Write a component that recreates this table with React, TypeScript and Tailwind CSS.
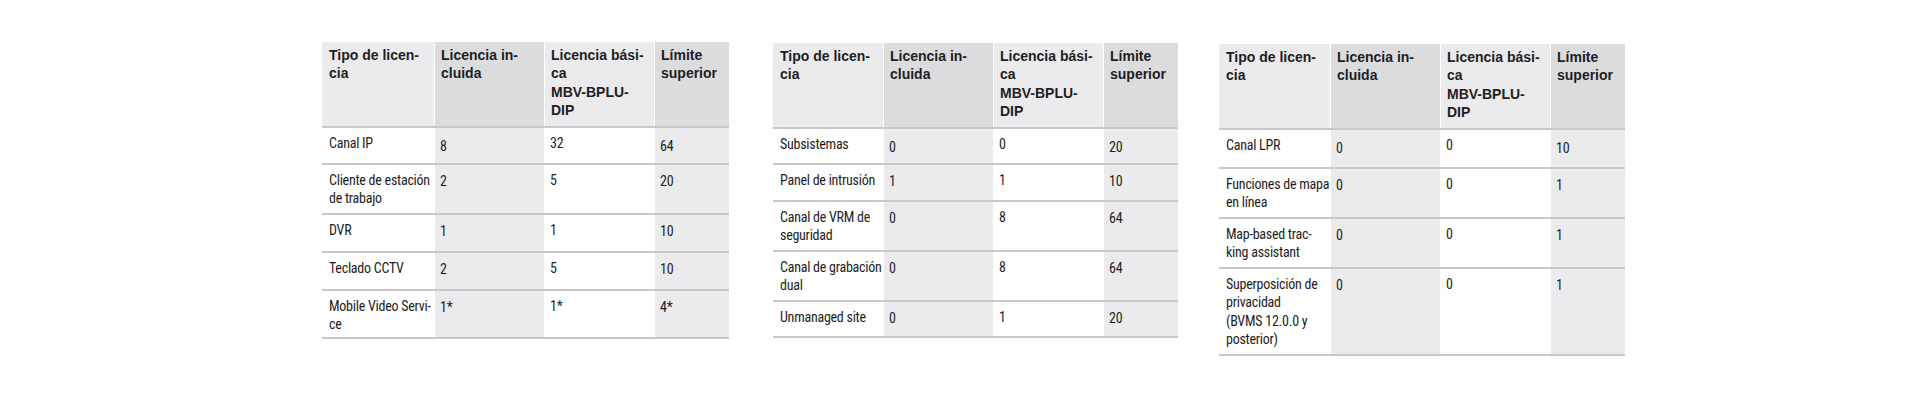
import React from "react";

type Row = { cells: string[][]; h: string };
type TableDef = { mt: string; ml: string; w: string; rows: Row[] };

const HEAD: string[][] = [
  ["Tipo de licen-", "cia"],
  ["Licencia in-", "cluida"],
  ["Licencia bási-", "ca", "MBV-BPLU-", "DIP"],
  ["Límite", "superior"],
];

const tables: TableDef[] = [
  {
    mt: "mt-[42px]",
    ml: "ml-[322px]",
    w: "grid-cols-[112px_110px_110px_75px]",
    rows: [
      { h: "h-[37px]", cells: [["Canal IP"], ["8"], ["32"], ["64"]] },
      { h: "h-[50px]", cells: [["Cliente de estación", "de trabajo"], ["2"], ["5"], ["20"]] },
      { h: "h-[38px]", cells: [["DVR"], ["1"], ["1"], ["10"]] },
      { h: "h-[38px]", cells: [["Teclado CCTV"], ["2"], ["5"], ["10"]] },
      { h: "h-[50px]", cells: [["Mobile Video Servi-", "ce"], ["1*"], ["1*"], ["4*"]] },
    ],
  },
  {
    mt: "mt-[43px]",
    ml: "ml-[44px]",
    w: "grid-cols-[110px_110px_110px_75px]",
    rows: [
      { h: "h-[36px]", cells: [["Subsistemas"], ["0"], ["0"], ["20"]] },
      { h: "h-[37px]", cells: [["Panel de intrusión"], ["1"], ["1"], ["10"]] },
      { h: "h-[50px]", cells: [["Canal de VRM de", "seguridad"], ["0"], ["8"], ["64"]] },
      { h: "h-[50px]", cells: [["Canal de grabación", "dual"], ["0"], ["8"], ["64"]] },
      { h: "h-[38px]", cells: [["Unmanaged site"], ["0"], ["1"], ["20"]] },
    ],
  },
  {
    mt: "mt-[44px]",
    ml: "ml-[41px]",
    w: "grid-cols-[111px_110px_110px_75px]",
    rows: [
      { h: "h-[39px]", cells: [["Canal LPR"], ["0"], ["0"], ["10"]] },
      { h: "h-[50px]", cells: [["Funciones de mapa", "en línea"], ["0"], ["0"], ["1"]] },
      { h: "h-[50px]", cells: [["Map-based trac-", "king assistant"], ["0"], ["0"], ["1"]] },
      {
        h: "h-[89px]",
        cells: [["Superposición de", "privacidad", "(BVMS 12.0.0 y", "posterior)"], ["0"], ["0"], ["1"]],
      },
    ],
  },
];

function Lines({ lines }: { lines: string[] }) {
  return (
    <>
      {lines.map((l, i) => (
        <div key={i} className="whitespace-nowrap">
          {l}
        </div>
      ))}
    </>
  );
}

function Table({ t }: { t: TableDef }) {
  return (
    <div className={`${t.mt} ${t.ml} shrink-0`}>
      <div className={`grid ${t.w} h-[84px]`}>
        {HEAD.map((lines, i) => (
          <div
            key={i}
            className={
              (i % 2 === 1 ? "bg-[#dcdcde] " : "bg-[#ebebed] ") +
              (i > 0 ? "border-l border-white px-[6px] " : "pl-[7px] pr-[2px] ") +
              "pt-[4px] text-[14px] leading-[18.3px] font-bold text-[#1e1e1e] [font-family:'Liberation_Sans',Arial,sans-serif]"
            }
          >
            <Lines lines={lines} />
          </div>
        ))}
      </div>
      {t.rows.map((r, ri) => (
        <div
          key={ri}
          className={`grid ${t.w} ${r.h} border-t-2 border-[#c8c8c9] ${ri === t.rows.length - 1 ? "border-b-2" : ""}`}
        >
          {r.cells.map((lines, ci) => {
            const shaded = ci % 2 === 1;
            const pt = shaded ? (ri === 0 ? "pt-[9px]" : "pt-[7px]") : "pt-[6px]";
            return (
              <div
                key={ci}
                className={
                  (shaded ? "bg-[#ebebed] " : "bg-white ") +
                  (ci > 0 ? "border-l border-white px-[5px] " : "pl-[7px] pr-[2px] ") +
                  pt +
                  " text-[14px] tracking-[-0.25px] leading-[18.3px] text-[#1e1e1e] [font-family:'Liberation_Sans_Narrow','Roboto_Condensed',Roboto,sans-serif]"
                }
              >
                <Lines lines={lines} />
              </div>
            );
          })}
        </div>
      ))}
    </div>
  );
}

export default function App() {
  return (
    <div className="w-[1920px] h-[400px] bg-white flex items-start">
      {tables.map((t, i) => (
        <Table key={i} t={t} />
      ))}
    </div>
  );
}
